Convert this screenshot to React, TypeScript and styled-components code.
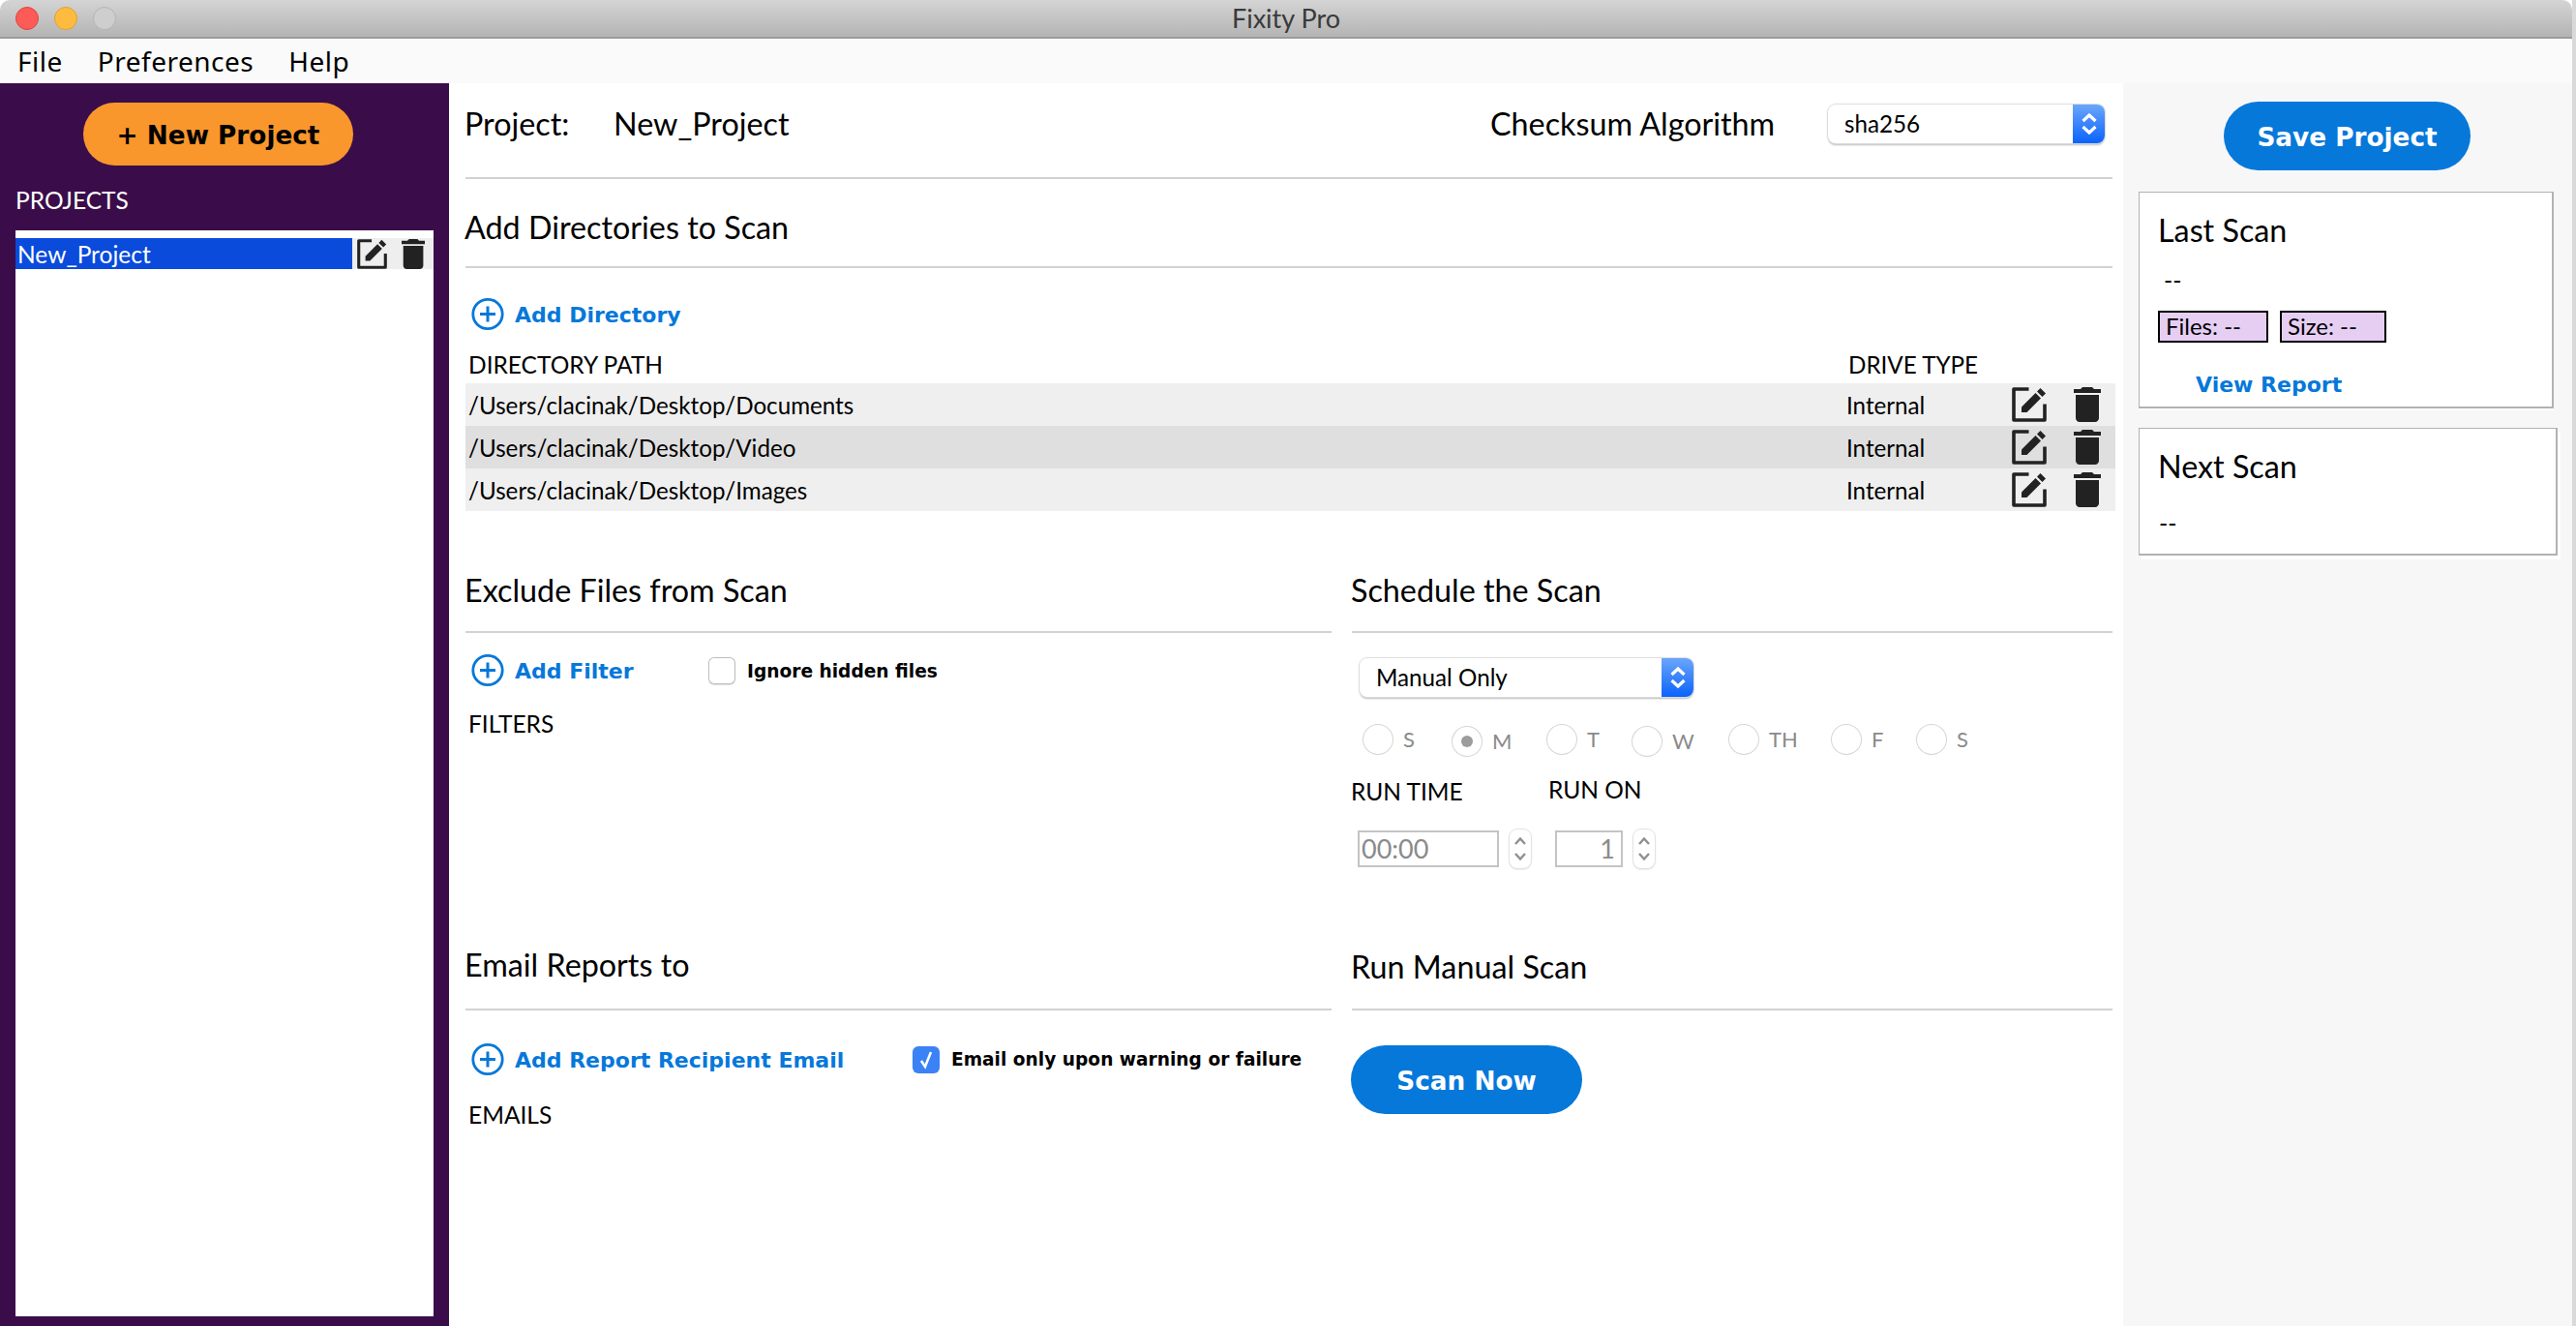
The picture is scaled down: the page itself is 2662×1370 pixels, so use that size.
import React from 'react';
import styled, { createGlobalStyle } from 'styled-components';

const BLUE = '#0678da';
const LATO = `Lato, "Open Sans", sans-serif`;
const BOLD = `"DejaVu Sans", Verdana, sans-serif`;

const GlobalStyle = createGlobalStyle`
    html, body {
        margin: 0;
        padding: 0;
        background: #fff;
        overflow: hidden;
    }
    * {
        box-sizing: border-box;
    }
`;

const Window = styled.div`
    width: 2662px;
    height: 1370px;
    display: flex;
    flex-flow: column nowrap;
    font-family: ${LATO};
    color: #000;
    overflow: hidden;
    background: linear-gradient(to right, #fff 2658px, #d9d9d9 2658px);
`;

const TitleBar = styled.div`
    width: 2658px;
    height: 40px;
    flex: none;
    display: flex;
    align-items: center;
    padding-left: 16px;
    gap: 16px;
    position: relative;
    border-radius: 10px 10px 0 0;
    border-bottom: 2px solid #9c9c9c;
    background: linear-gradient(#d4d4d4, #b4b4b4);
`;

const Light = styled.span<{ $color: string; $edge: string }>`
    width: 24px;
    height: 24px;
    border-radius: 50%;
    background: ${(p) => p.$color};
    border: 1px solid ${(p) => p.$edge};
`;

const WindowTitle = styled.div`
    position: absolute;
    left: 0;
    right: 0;
    top: 4px;
    text-align: center;
    font: 27px/30px ${LATO};
    color: #3a3a3a;
`;

const MenuBar = styled.div`
    width: 2658px;
    height: 46px;
    flex: none;
    display: flex;
    align-items: center;
    gap: 36px;
    padding-left: 18px;
    background: #fafafa;
    font: 28px/34px "Noto Sans", sans-serif;
    letter-spacing: 0.5px;
`;

const Body = styled.div`
    width: 2658px;
    flex: 1;
    min-height: 0;
    display: grid;
    grid-template-columns: 464px 1730px 464px;
`;

const Sidebar = styled.aside`
    background: #3a0d4a;
    display: flex;
    flex-flow: column nowrap;
    padding: 20px 16px 10px;
`;

const Pill = styled.button<{ $bg: string; $fg: string; $w: number; $h: number }>`
    width: ${(p) => p.$w}px;
    height: ${(p) => p.$h}px;
    flex: none;
    border: 0;
    padding: 2px 0 0;
    border-radius: ${(p) => p.$h / 2}px;
    background: ${(p) => p.$bg};
    color: ${(p) => p.$fg};
    font: bold 26.3px/34px ${BOLD};
`;

const NewProject = styled(Pill)`
    margin-left: 70px;
`;

const ProjectsLabel = styled.div`
    margin-top: 20px;
    font: 24.5px/32px ${LATO};
    color: #fff;
`;

const ProjectList = styled.div`
    margin-top: 15px;
    flex: 1;
    background: #fff;
    padding-top: 8px;
`;

const ProjectRow = styled.div`
    height: 32px;
    display: flex;
    background: #eee;
`;

const ProjectName = styled.div`
    width: 348px;
    background: #0a4bdc;
    color: #fff;
    padding: 1px 0 0 2px;
    font: 24.5px/32px ${LATO};
`;

const RowIcons = styled.div`
    display: flex;
    align-items: center;
    gap: 15px;
    padding-left: 5px;
`;

const Main = styled.main`
    padding: 0 11px 0 17px;
    display: flex;
    flex-flow: column nowrap;
`;

const ProjectHeader = styled.div`
    height: 99px;
    flex: none;
    display: flex;
    align-items: center;
    padding-bottom: 14px;
    border-bottom: 2px solid #d2d2d2;
    font: 32.3px/40px ${LATO};
`;

const ProjectKey = styled.div`
    width: 153px;
    text-indent: -1px;
`;

const ProjectValue = styled.div`
    width: 906px;
`;

const AlgoLabel = styled.div`
    width: 349px;
`;

const SelectBox = styled.div<{ $w: number; $ml?: number; $mt?: number }>`
    width: ${(p) => p.$w}px;
    height: 40px;
    margin-left: ${(p) => p.$ml ?? 0}px;
    margin-top: ${(p) => p.$mt ?? 0}px;
    display: flex;
    flex: none;
    justify-content: space-between;
    border-radius: 8px;
    background: #fff;
    box-shadow: 0 0 1px 1px #dcdcdc, 0 2px 2px #bbb;
    overflow: hidden;
    font: 24.2px/40px ${LATO};
    padding-left: 17px;
`;

const SelectArrows = styled.div`
    width: 33px;
    display: flex;
    align-items: center;
    justify-content: center;
    background: linear-gradient(#6ba6fb, #0a63fb);
`;

const SectionTitle = styled.h2<{ $pb: number; $h: number }>`
    margin: 0;
    height: ${(p) => p.$h}px;
    flex: none;
    display: flex;
    align-items: flex-end;
    padding-bottom: ${(p) => p.$pb}px;
    border-bottom: 2px solid #d2d2d2;
    font: 400 32.3px/40px ${LATO};
    text-indent: -1px;
`;

const ActionRow = styled.div<{ $mt: number }>`
    margin-top: ${(p) => p.$mt}px;
    height: 35px;
    padding-left: 6px;
    display: flex;
    align-items: center;
`;

const AddLink = styled.div<{ $w: number }>`
    width: ${(p) => p.$w}px;
    height: 35px;
    flex: none;
    display: flex;
    align-items: center;
    gap: 11px;
    color: ${BLUE};
    font: bold 22px/35px ${BOLD};
`;

const NudgedText = styled.span`
    padding-top: 2px;
`;

const ColumnLabel = styled.div<{ $mt?: number }>`
    margin-top: ${(p) => p.$mt ?? 0}px;
    margin-left: 3px;
    font: 24.5px/30px ${LATO};
`;

const DirHead = styled.div`
    margin-top: 20px;
    height: 34px;
    display: grid;
    grid-template-columns: 1426px auto;
    padding-left: 3px;
    font: 24.5px/30px ${LATO};
`;

const DriveType = styled.span`
    font-size: 24.2px;
`;

const DirRow = styled.div<{ $alt?: boolean }>`
    height: 44px;
    margin-right: -3px;
    display: flex;
    align-items: center;
    background: ${(p) => (p.$alt ? '#dfdfdf' : '#efefef')};
    font: 24.2px/44px ${LATO};
    padding-left: 3px;
`;

const DirPath = styled.div`
    width: 1424px;
    padding-top: 1px;
`;

const DirDrive = styled.div`
    width: 171px;
    padding-top: 1px;
`;

const DirIcons = styled.div`
    display: flex;
    align-items: center;
    gap: 28px;
`;

const Columns = styled.div<{ $h?: number }>`
    display: grid;
    grid-template-columns: 895px 786px;
    column-gap: 21px;
    height: ${(p) => (p.$h ? `${p.$h}px` : 'auto')};
    flex: none;
`;

const CheckLabel = styled.label`
    display: flex;
    align-items: center;
    gap: 12px;
    height: 28px;
    font: bold 18.6px/28px ${BOLD};
`;

const CheckBox = styled.span<{ $on?: boolean }>`
    width: 28px;
    height: 28px;
    flex: none;
    display: flex;
    align-items: center;
    justify-content: center;
    border-radius: 6px;
    background: ${(p) => (p.$on ? '#3b82f6' : '#fff')};
    box-shadow: ${(p) => (p.$on ? 'none' : 'inset 0 0 0 1px #bdbdbd, 0 1px 1px #ddd')};
`;

const RadioRow = styled.div`
    margin: 28px 0 0 11px;
    height: 34px;
    display: flex;
`;

const RadioItem = styled.div<{ $w: number; $low?: boolean }>`
    width: ${(p) => p.$w}px;
    flex: none;
    display: flex;
    align-items: center;
    gap: 10px;
    height: 32px;
    margin-top: ${(p) => (p.$low ? 2 : 0)}px;
    color: #8a8a8a;
    font: 22px/32px ${LATO};
`;

const Radio = styled.span`
    width: 32px;
    height: 32px;
    flex: none;
    display: flex;
    align-items: center;
    justify-content: center;
    border-radius: 50%;
    background: #fff;
    box-shadow: inset 0 0 0 1px #d6d6d6;
`;

const RadioDot = styled.span`
    width: 12px;
    height: 12px;
    border-radius: 50%;
    background: #9c9c9c;
`;

const RunGrid = styled.div`
    margin: 19px 0 0 -1px;
    display: grid;
    grid-template-columns: 204px 1fr;
`;

const RunLabel = styled.div<{ $shift: number }>`
    height: 30px;
    margin-top: ${(p) => p.$shift}px;
    font: 24.5px/30px ${LATO};
`;

const StepRow = styled.div`
    margin-top: 24px;
    display: flex;
    align-items: center;
    gap: 11px;
`;

const FieldBox = styled.div<{ $w: number; $right?: boolean; $ml: number }>`
    width: ${(p) => p.$w}px;
    height: 38px;
    margin-left: ${(p) => p.$ml}px;
    border: 2px solid #c4c4c4;
    background: #fff;
    color: #8a8a8a;
    padding: 0 ${(p) => (p.$right ? 6 : 2)}px;
    text-align: ${(p) => (p.$right ? 'right' : 'left')};
    font: 27px/34px ${LATO};
`;

const Stepper = styled.div`
    width: 22px;
    height: 40px;
    display: flex;
    align-items: center;
    justify-content: center;
    border-radius: 8px;
    background: #fff;
    box-shadow: 0 0 1px 1px #e2e2e2, 0 1px 2px #ccc;
`;

const ScanNow = styled(Pill)`
    margin-top: 36px;
    margin-left: -1px;
`;

const RightPanel = styled.aside`
    background: #f7f7f7;
    display: flex;
    flex-flow: column nowrap;
    padding: 19px 0 0 16px;
`;

const SaveProject = styled(Pill)`
    margin-left: 88px;
`;

const Card = styled.div<{ $w: number; $h: number; $mt: number; $rim?: boolean }>`
    width: ${(p) => p.$w}px;
    height: ${(p) => p.$h}px;
    margin-top: ${(p) => p.$mt}px;
    flex: none;
    background: #fff;
    border: solid #b2b2b2;
    border-width: 1px 2px 2px 1px;
    padding-left: 20px;
    box-shadow: ${(p) => (p.$rim ? '3px 4px 0 #fff' : '0 2px 0 #fff')};
`;

const CardTitle = styled.div`
    padding-top: 19px;
    text-indent: -1px;
    font: 32.3px/40px ${LATO};
`;

const CardValue = styled.div<{ $mt: number; $ml?: number }>`
    margin-top: ${(p) => p.$mt}px;
    margin-left: ${(p) => p.$ml ?? 0}px;
    font: 25px/30px ${LATO};
`;

const Chips = styled.div`
    margin: 17px 0 0 -1px;
    display: flex;
    gap: 12px;
`;

const Chip = styled.div<{ $w: number }>`
    width: ${(p) => p.$w}px;
    height: 33px;
    border: 2px solid #000;
    background: #e6cef3;
    padding-left: 6px;
    font: 24px/28px ${LATO};
`;

const ReportLink = styled.div`
    margin: 29px 0 0 38px;
    color: ${BLUE};
    font: bold 22px/30px ${BOLD};
`;

const EditIcon = ({ size = 36 }: { size?: number }) => (
    <svg width={size} height={size} viewBox="0 0 36 36" fill="none">
        <path d="M17.500 2H2V34H34V17.500" stroke="#222" strokeWidth="3.600" strokeLinejoin="round" />
        <path d="M10 26V20.500L24.500 6L30 11.500L15.500 26Z" fill="#222" />
        <path d="M26 4.500L29.500 1L35 6.500L31.500 10Z" fill="#222" />
    </svg>
);

const TrashIcon = ({ h = 36 }: { h?: number }) => (
    <svg width={(h * 14) / 18} height={h} viewBox="5 3 14 18" fill="#222">
        <path d="M6 19c0 1.100.9 2 2 2h8c1.100 0 2-.9 2-2V7H6v12zM19 4h-3.500l-1-1h-5l-1 1H5v2h14V4z" />
    </svg>
);

const PlusIcon = () => (
    <svg width="34" height="35" viewBox="0 0 34 35" fill="none" stroke={BLUE}>
        <circle cx="17" cy="17.500" r="15.200" strokeWidth="2.800" />
        <path d="M17 9.500V25.500M9 17.500H25" strokeWidth="3" />
    </svg>
);

const SelectChevrons = () => (
    <svg width="16" height="24" viewBox="0 0 16 24" fill="none" stroke="#fff" strokeWidth="3.200">
        <path d="M1.500 9L8 3L14.500 9M1.500 15L8 21L14.500 15" />
    </svg>
);

const StepChevrons = () => (
    <svg width="12" height="26" viewBox="0 0 12 26" fill="none" stroke="#8f8f8f" strokeWidth="2.400">
        <path d="M1 8L6 2.500L11 8M1 18L6 23.500L11 18" />
    </svg>
);

const days = [
    { label: 'S', w: 92 },
    { label: 'M', w: 98, low: true, on: true },
    { label: 'T', w: 88 },
    { label: 'W', w: 100, low: true },
    { label: 'TH', w: 106 },
    { label: 'F', w: 88 },
    { label: 'S', w: 80 },
];

const directories = ['Documents', 'Video', 'Images'];

function App() {
    return (
        <Window>
            <GlobalStyle />
            <TitleBar>
                <Light $color="#fc5b57" $edge="#e0443e" />
                <Light $color="#fdbc40" $edge="#dea034" />
                <Light $color="#cecece" $edge="#b4b4b4" />
                <WindowTitle>Fixity Pro</WindowTitle>
            </TitleBar>
            <MenuBar>
                <span>File</span>
                <span>Preferences</span>
                <span>Help</span>
            </MenuBar>
            <Body>
                <Sidebar>
                    <NewProject $bg="#f9972c" $fg="#000" $w={279} $h={65}>+ New Project</NewProject>
                    <ProjectsLabel>PROJECTS</ProjectsLabel>
                    <ProjectList>
                        <ProjectRow>
                            <ProjectName>New_Project</ProjectName>
                            <RowIcons>
                                <EditIcon size={31} />
                                <TrashIcon h={31} />
                            </RowIcons>
                        </ProjectRow>
                    </ProjectList>
                </Sidebar>

                <Main>
                    <ProjectHeader>
                        <ProjectKey>Project:</ProjectKey>
                        <ProjectValue>New_Project</ProjectValue>
                        <AlgoLabel>Checksum Algorithm</AlgoLabel>
                        <SelectBox $w={286}>
                            sha256
                            <SelectArrows><SelectChevrons /></SelectArrows>
                        </SelectBox>
                    </ProjectHeader>

                    <SectionTitle $h={92} $pb={20}>Add Directories to Scan</SectionTitle>
                    <ActionRow $mt={30}>
                        <AddLink $w={300}><PlusIcon /><NudgedText>Add Directory</NudgedText></AddLink>
                    </ActionRow>
                    <DirHead>
                        <span>DIRECTORY PATH</span>
                        <DriveType>DRIVE TYPE</DriveType>
                    </DirHead>
                    {directories.map((name, i) => (
                        <DirRow key={name} $alt={i === 1}>
                            <DirPath>/Users/clacinak/Desktop/{name}</DirPath>
                            <DirDrive>Internal</DirDrive>
                            <DirIcons>
                                <EditIcon />
                                <TrashIcon />
                            </DirIcons>
                        </DirRow>
                    ))}

                    <Columns $h={430}>
                        <div>
                            <SectionTitle $h={126} $pb={22}>Exclude Files from Scan</SectionTitle>
                            <ActionRow $mt={21}>
                                <AddLink $w={245}><PlusIcon /><NudgedText>Add Filter</NudgedText></AddLink>
                                <CheckLabel><CheckBox /><NudgedText>Ignore hidden files</NudgedText></CheckLabel>
                            </ActionRow>
                            <ColumnLabel $mt={23}>FILTERS</ColumnLabel>
                        </div>
                        <div>
                            <SectionTitle $h={126} $pb={22}>Schedule the Scan</SectionTitle>
                            <SelectBox $w={345} $ml={8} $mt={26}>
                                Manual Only
                                <SelectArrows><SelectChevrons /></SelectArrows>
                            </SelectBox>
                            <RadioRow>
                                {days.map((d, i) => (
                                    <RadioItem key={i} $w={d.w} $low={d.low}>
                                        <Radio>{d.on && <RadioDot />}</Radio>
                                        {d.label}
                                    </RadioItem>
                                ))}
                            </RadioRow>
                            <RunGrid>
                                <RunLabel $shift={2}>RUN TIME</RunLabel>
                                <RunLabel $shift={0}>RUN ON</RunLabel>
                            </RunGrid>
                            <StepRow>
                                <FieldBox $w={146} $ml={6}>00:00</FieldBox>
                                <Stepper><StepChevrons /></Stepper>
                                <FieldBox $w={70} $ml={14} $right>1</FieldBox>
                                <Stepper><StepChevrons /></Stepper>
                            </StepRow>
                        </div>
                    </Columns>

                    <Columns>
                        <div>
                            <SectionTitle $h={86} $pb={25}>Email Reports to</SectionTitle>
                            <ActionRow $mt={33}>
                                <AddLink $w={456}><PlusIcon /><NudgedText>Add Report Recipient Email</NudgedText></AddLink>
                                <CheckLabel>
                                    <CheckBox $on>
                                        <svg width="18" height="22" viewBox="0 0 18 22" fill="none" stroke="#fff" strokeWidth="2.600">
                                            <path d="M4 12L8 18L14 3" />
                                        </svg>
                                    </CheckBox>
                                    Email only upon warning or failure
                                </CheckLabel>
                            </ActionRow>
                            <ColumnLabel $mt={25}>EMAILS</ColumnLabel>
                        </div>
                        <div>
                            <SectionTitle $h={86} $pb={23}>Run Manual Scan</SectionTitle>
                            <ScanNow $bg={BLUE} $fg="#fff" $w={239} $h={71}>Scan Now</ScanNow>
                        </div>
                    </Columns>
                </Main>

                <RightPanel>
                    <SaveProject $bg={BLUE} $fg="#fff" $w={255} $h={71}>Save Project</SaveProject>
                    <Card $w={429} $h={224} $mt={22}>
                        <CardTitle>Last Scan</CardTitle>
                        <CardValue $mt={16} $ml={5}>--</CardValue>
                        <Chips>
                            <Chip $w={114}>Files: --</Chip>
                            <Chip $w={110}>Size: --</Chip>
                        </Chips>
                        <ReportLink>View Report</ReportLink>
                    </Card>
                    <Card $w={433} $h={132} $mt={20} $rim>
                        <CardTitle>Next Scan</CardTitle>
                        <CardValue $mt={23}>--</CardValue>
                    </Card>
                </RightPanel>
            </Body>
        </Window>
    );
}

export default App;
